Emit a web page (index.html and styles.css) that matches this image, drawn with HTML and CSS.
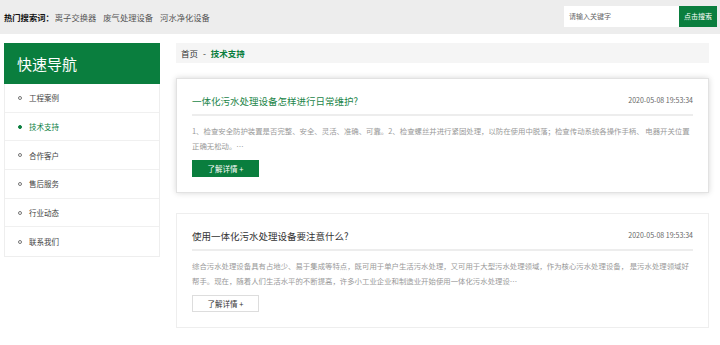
FILE: index.html
```html
<!DOCTYPE html>
<html lang="zh-CN">
<head>
<meta charset="utf-8">
<title>技术支持</title>
<link rel="stylesheet" href="styles.css">
</head>
<body>
<div class="topbar">
  <div class="hot">
    <span class="hot-label">热门搜索词：</span>
    <a class="hot-link">离子交换器</a>
    <a class="hot-link">废气处理设备</a>
    <a class="hot-link">河水净化设备</a>
  </div>
  <div class="search">
    <div class="search-input">请输入关键字</div>
    <div class="search-btn">点击搜索</div>
  </div>
</div>
<div class="page">
  <aside class="side">
    <div class="side-title">快速导航</div>
    <ul class="side-nav">
      <li class="side-item"><span class="dot"></span>工程案例</li>
      <li class="side-item active"><span class="dot"></span>技术支持</li>
      <li class="side-item"><span class="dot"></span>合作客户</li>
      <li class="side-item"><span class="dot"></span>售后服务</li>
      <li class="side-item"><span class="dot"></span>行业动态</li>
      <li class="side-item"><span class="dot"></span>联系我们</li>
    </ul>
  </aside>
  <main class="main">
    <div class="crumb">首页 <span class="sep">-</span> <span class="crumb-cur">技术支持</span></div>
    <div class="card card-active">
      <div class="card-head">
        <div class="card-title">一体化污水处理设备怎样进行日常维护?</div>
        <div class="card-date">2020-05-08 19:53:34</div>
      </div>
      <p class="card-desc">1、检查安全防护装置是否完整、安全、灵活、准确、可靠。2、检查螺丝并进行紧固处理，以防在使用中脱落；检查传动系统各操作手柄、 电器开关位置正确无松动。…</p>
      <div class="btn btn-solid">了解详情 +</div>
    </div>
    <div class="card">
      <div class="card-head">
        <div class="card-title">使用一体化污水处理设备要注意什么?</div>
        <div class="card-date">2020-05-08 19:53:34</div>
      </div>
      <p class="card-desc">综合污水处理设备具有占地少、易于集成等特点，既可用于单户生活污水处理，又可用于大型污水处理领域，作为核心污水处理设备， 是污水处理领域好帮手。现在，随着人们生活水平的不断提高，许多小工业企业和制造业开始使用一体化污水处理设…</p>
      <div class="btn btn-line">了解详情 +</div>
    </div>
  </main>
</div>
</body>
</html>
```
FILE: styles.css
```css
* { box-sizing: border-box; }
body {
  margin: 0;
  background: #fff;
  font-family: "Noto Sans CJK SC", "Noto Sans", sans-serif;
  color: #333;
}
.topbar {
  height: 34px;
  background: #ededed;
  display: flex;
  align-items: center;
  justify-content: space-between;
  padding: 0 3px 0 4px;
}
.hot { display: flex; align-items: center; font-size: 8.3px; }
.hot-label { font-weight: bold; color: #111; margin-right: 1px; }
.hot-link { color: #555; margin-right: 7px; }
.search { display: flex; height: 21px; margin-top: -1px; }
.search-input {
  width: 115px;
  background: #fff;
  color: #666;
  font-size: 7px;
  line-height: 21px;
  padding-left: 5px;
}
.search-btn {
  width: 38px;
  background: #0a7e3e;
  color: #fff;
  font-size: 7px;
  line-height: 21px;
  text-align: center;
}
.page {
  display: flex;
  gap: 16px;
  padding: 9px 11px 0 4px;
  align-items: flex-start;
}
.side {
  width: 156px;
  flex: none;
  border: 1px solid #eee;
  border-top: none;
}
.side-title {
  height: 41px;
  margin: 0 -1px;
  background: #0a7e3e;
  color: #fff;
  font-size: 15px;
  line-height: 41px;
  padding-left: 13px;
}
.side-nav { list-style: none; margin: 0; padding: 0; }
.side-item {
  height: 28.7px;
  display: flex;
  align-items: center;
  font-size: 7.5px;
  color: #444;
  padding-left: 13px;
  border-bottom: 1px solid #f0f0f0;
}
.side-item:last-child { border-bottom: none; }
.dot {
  width: 4px;
  height: 4px;
  border: 1px solid #777;
  border-radius: 50%;
  margin-right: 7px;
}
.side-item.active { color: #0a7e3e; }
.side-item.active .dot { background: #0a7e3e; border-color: #0a7e3e; }
.main { flex: 1; min-width: 0; }
.crumb {
  height: 20px;
  background: #f5f5f5;
  font-size: 8.5px;
  line-height: 20px;
  padding-left: 5px;
  color: #333;
}
.sep { margin: 0 3px; }
.crumb-cur { color: #0a7e3e; font-weight: bold; }
.card {
  margin-top: 15px;
  border: 1px solid #eee;
  padding: 15px 15px 15px;
  background: #fff;
}
.card + .card { margin-top: 20px; }
.card-active {
  border-color: #e2e2e2;
  box-shadow: 0 0 6px rgba(0, 0, 0, 0.16);
}
.card-head {
  display: flex;
  justify-content: space-between;
  align-items: center;
  height: 14px;
  border-bottom: 2px solid #ededed;
  padding-bottom: 6px;
  box-sizing: content-box;
}
.card-title { font-size: 9.5px; line-height: 14px; color: #333; }
.card-active .card-title { color: #1b8548; }
.card-date { font-size: 7px; line-height: 14px; color: #666; margin-top: -2px; }
.card-desc {
  margin: 7px 0 7px;
  font-size: 7.4px;
  line-height: 15px;
  color: #999;
}
.btn {
  width: 67px;
  height: 17px;
  font-size: 7.5px;
  line-height: 17px;
  text-align: center;
}
.btn-solid { background: #0a7e3e; color: #fff; }
.btn-line { border: 1px solid #ddd; color: #333; line-height: 15px; }
```
